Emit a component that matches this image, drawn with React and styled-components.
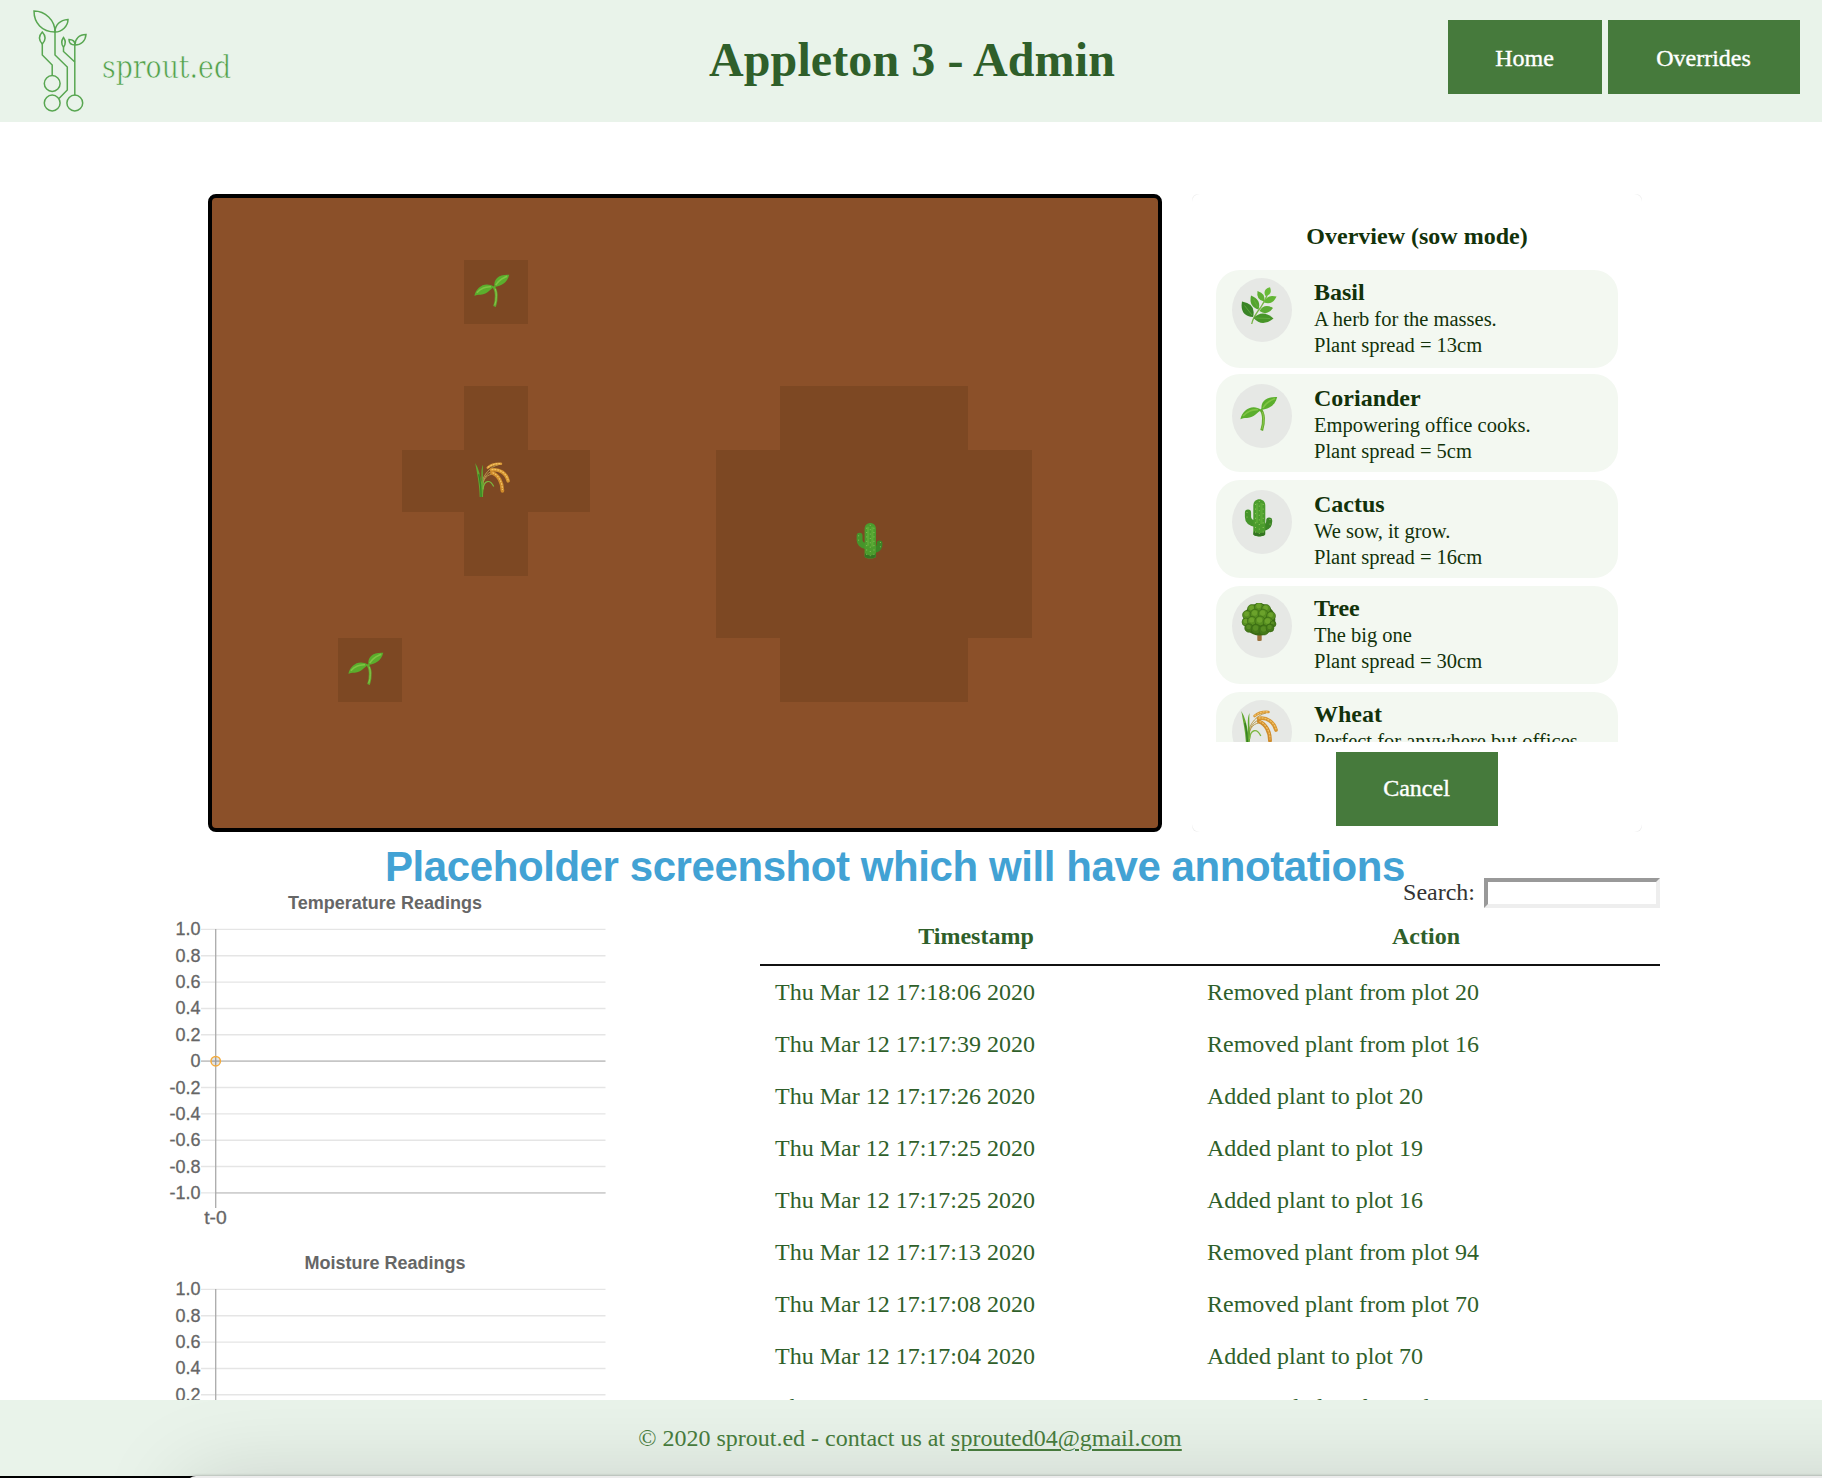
import React from "react";
import styled, { createGlobalStyle } from "styled-components";

const serif = `"Liberation Serif", "Times New Roman", serif`;
const sans = `"Liberation Sans", Helvetica, Arial, sans-serif`;

const GlobalStyle = createGlobalStyle`
  * { box-sizing: border-box; }
  body { margin: 0; background: #fff; font-family: ${serif}; font-size: 24px; overflow: hidden; }
`;

const Page = styled.div`
  position: relative;
  width: 1822px;
  height: 1478px;
  display: flex;
  flex-direction: column;
  overflow: hidden;
  background: #fff;
`;

const Header = styled.header`
  height: 122px;
  flex: none;
  display: grid;
  grid-template-columns: 1fr auto 1fr;
  align-items: start;
  background: #e9f3ea;
`;

const Title = styled.h1`
  margin: 0;
  padding: 31px 0 0 2px;
  font-size: 48px;
  line-height: 58px;
  letter-spacing: 0.1px;
  color: #2f5f2a;
`;

const Nav = styled.nav`
  display: flex;
  justify-content: flex-end;
  gap: 6px;
  padding: 20px 22px 0 0;
`;

const Button = styled.button`
  height: 74px;
  border: 0;
  background: #467a3c;
  color: #fff;
  font: 24px/28px ${serif};
  -webkit-text-stroke: 0.4px #fff;
`;

const NavButton = styled(Button)`
  width: ${(p) => p.$width}px;
  padding: 2px 1px 0 0;
`;

const CancelButton = styled(Button)`
  width: 162px;
  padding: 0 1px 2px 0;
`;

const Main = styled.main`
  flex: 1;
  min-height: 0;
  overflow: hidden;
  padding-top: 72px;
`;

const GardenRow = styled.section`
  display: flex;
  gap: 30px;
  height: 638px;
  padding-left: 208px;
`;

const Board = styled.div`
  width: 954px;
  display: grid;
  grid-template-columns: repeat(7, 64px 62px) 64px;
  grid-template-rows: repeat(5, 62px 64px);
  border: 4px solid #000;
  border-radius: 8px;
  background: #8b5029;
`;

const Plot = styled.div`
  background: ${(p) => (p.$shaded ? "#7d4823" : "transparent")};
  padding: 11px 0 0 10px;
  line-height: 0;
`;

const PanelEdge = styled.aside`
  width: 450px;
  border-radius: 6px;
  background: #ededed;
`;

const Panel = styled.div`
  height: 100%;
  border-radius: 8px;
  background: #fff;
  display: flex;
  flex-direction: column;
  align-items: center;
  color: #12320a;
`;

const PanelTitle = styled.h2`
  margin: 0;
  padding-top: 28px;
  height: 76px;
  font-size: 24px;
  line-height: 28px;
`;

const PlantList = styled.div`
  width: 402px;
  height: 472px;
  margin-bottom: 10px;
  overflow: hidden;
`;

const PlantCard = styled.div`
  height: 98px;
  margin-bottom: ${(p) => p.$gap}px;
  padding: ${(p) => p.$top}px 16px 0;
  display: flex;
  gap: 22px;
  border-radius: 24px;
  background: #f3f8f1;
`;

const Badge = styled.div`
  width: 60px;
  height: 64px;
  flex: none;
  padding: 9px 0 0 8px;
  border-radius: 50%;
  background: #e6e8e5;
  line-height: 0;
`;

const PlantName = styled.div`
  font-weight: bold;
  line-height: 28px;
`;

const PlantText = styled.div`
  font-size: 20.5px;
  line-height: 26px;
  white-space: nowrap;
`;

const DataRow = styled.section`
  display: flex;
  padding: 46px 0 0 140px;
`;

const Charts = styled.div`
  width: 620px;
  display: flex;
  flex-direction: column;
  padding-top: 2px;
  svg { display: block; flex: none; }
`;

const LogPanel = styled.div`
  width: 900px;
`;

const SearchBar = styled.label`
  display: flex;
  justify-content: flex-end;
  gap: 9px;
  height: 44px;
  line-height: 28px;
  color: #333;
`;

const SearchInput = styled.input`
  width: 176px;
  height: 30px;
  padding: 0;
  border: 4px solid;
  border-color: #999 #eee #eee #999;
  border-radius: 0;
  background: #fff;
`;

const LogHead = styled.div`
  display: grid;
  grid-template-columns: 432px 468px;
  height: 44px;
  line-height: 28px;
  border-bottom: 2px solid #111;
  font-weight: bold;
  text-align: center;
  color: #2f5f2a;
`;

const LogRow = styled.div`
  display: grid;
  grid-template-columns: 432px 468px;
  height: 52px;
  line-height: 52px;
  color: #2f5f2a;
  div { padding-left: 15px; }
  &:last-child { line-height: 50px; }
`;

const Annotation = styled.div`
  position: absolute;
  left: 385px;
  top: 843px;
  font: bold 42px/48px ${sans};
  letter-spacing: -0.42px;
  white-space: nowrap;
  color: #42a2d4;
`;

const Footer = styled.footer`
  position: relative;
  flex: none;
  height: 78px;
  padding-right: 2px;
  overflow: hidden;
  text-align: center;
  line-height: 76px;
  background: linear-gradient(#e9f3ea, #e9f3ea) 0 0 / 100% 76px no-repeat #000;
  color: #467a3c;
`;

const FooterText = styled.span`
  position: relative;
  a { color: inherit; text-decoration-thickness: 2px; text-underline-offset: 3px; }
`;

const WindowBehind = styled.div`
  position: absolute;
  left: 186px;
  top: 76px;
  width: 1800px;
  height: 300px;
  border-radius: 10px 0 0 0;
  background: #ececec;
  box-shadow: 0 0 3px rgba(0, 0, 0, 0.35), 0 4px 90px rgba(0, 0, 0, 0.15);
`;

function Logo() {
  return (
    <svg width="260" height="122" viewBox="0 0 260 122" fill="none" stroke="#58a651" strokeWidth="1.5">
      <path d="M34 11C45 11 55 20 55 32C42 32 34 23 34 11Z" />
      <path d="M55 32C55 25 60 20 68 19.500C68 26 62 32 55 32Z" />
      <path d="M55 30V55L67.300 67V90L59 98.500" />
      <path d="M42.300 32C38.500 36 38.500 40 42.300 44C46 40 46 36 42.300 32Z" />
      <path d="M42.300 43V55L52.200 65V76" />
      <path d="M63.500 37.500C61 41 61 44 63.500 47C66 44 66 41 63.500 37.500Z" />
      <path d="M63.500 46V51.500L74.800 62" />
      <path d="M74.800 42V95.500" />
      <path d="M75 45C75 39 79 34.500 86 34.500C85.500 41 81 45 75 45ZM75 45C71.500 45 69 43 69 39.500C72.500 39.500 75 41.500 75 45Z" />
      <circle cx="52.200" cy="83.500" r="7.900" />
      <circle cx="52.200" cy="103" r="7.900" />
      <circle cx="74.800" cy="103" r="7.900" />
      <text x="102" y="77.500" fontFamily="DejaVu Serif, serif" fontSize="32" textLength="129" lengthAdjust="spacingAndGlyphs" fill="#4fa047" stroke="#e9f3ea" strokeWidth=".65">sprout.ed</text>
    </svg>
  );
}

function Leaf({ from, to, w, fill = "#55a52c" }) {
  const [x1, y1] = from;
  const [x2, y2] = to;
  const dx = x2 - x1, dy = y2 - y1;
  const len = Math.hypot(dx, dy);
  const nx = (-dy / len) * w, ny = (dx / len) * w;
  const mx = x1 + dx * 0.45, my = y1 + dy * 0.45;
  return (
    <path d={`M${x1} ${y1}Q${mx + nx} ${my + ny} ${x2} ${y2}Q${mx - nx} ${my - ny} ${x1} ${y1}Z`} fill={fill} />
  );
}

function Basil() {
  return (
    <>
      <path d="M11.700 37C13 30 17 25 21 20C24 15 27 10 28 5" fill="none" stroke="#79b548" strokeWidth="1.300" />
      <Leaf from={[25.5, 9]} to={[30, 0.3]} w={6} fill="#69bb38" />
      <Leaf from={[24, 14.5]} to={[17.5, 4]} w={6} fill="#5fb033" />
      <Leaf from={[24, 15.5]} to={[36.5, 9.5]} w={6.5} fill="#62b534" />
      <Leaf from={[18.5, 22.5]} to={[11, 8.5]} w={7.5} fill="#54a42f" />
      <Leaf from={[19.5, 24]} to={[33, 21]} w={7} fill="#5cab33" />
      <Leaf from={[13, 30]} to={[2, 14.5]} w={10.5} fill="#398426" />
      <Leaf from={[13.5, 31]} to={[33.5, 31.5]} w={9.5} fill="#479528" />
      <path d="M12 28L4.500 18.500M15 31L30 31.500M17.500 20L13.500 12" stroke="#6fb548" strokeWidth=".6" />
    </>
  );
}

function Sprout() {
  return (
    <>
      <path d="M20.500 16.500C24 20 24.500 29 21.700 37.500" fill="none" stroke="#64ab2e" strokeWidth="2.900" />
      <path d="M.4 26.200C2.500 17 12 10.500 21.500 17C17 19 15 24.500 7 25C4 25 2 25.500 .4 26.200Z" fill="#5bae2d" />
      <path d="M21.500 17C20.500 8 26 3.500 37.200 4C35 13 29 15.500 21.500 17Z" fill="#5bae2d" />
      <path d="M3 23C8 17 13 17 18 16.500M23 15C26 9 30 8 35 5.500" fill="none" stroke="#7fc443" strokeWidth="1.600" />
      <path d="M22.500 19C24 23 24 30 22 36" fill="none" stroke="#93cc52" strokeWidth=".8" />
    </>
  );
}

function Cactus() {
  return (
    <>
      <path d="M8 13.500V18C8 22 10.500 24 16 25" fill="none" stroke="#46952b" strokeWidth="6.200" strokeLinecap="round" />
      <path d="M29.200 21.500C29.500 26 27 28.500 22 29" fill="none" stroke="#3b8526" strokeWidth="6" strokeLinecap="round" />
      <path d="M13.300 6.500C13.300-2 25.300-2 25.300 6.500V35C25.300 38.300 13.300 38.300 13.300 35Z" fill="#4b9c2d" />
      <path d="M17 4V24M21.500 4V25" stroke="#62b33a" strokeWidth="2.400" opacity=".65" />
      <path d="M14 32C17 35 22 35 25 32V35C25.300 38 13.300 38 13.300 35Z" fill="#347522" />
      <path d="M15.500 5V34M19.300 2V35M23.200 5V34M7 13V20M30 20V27" fill="none" stroke="#b0cf74" strokeWidth=".9" strokeDasharray="1 3.600" opacity=".8" />
    </>
  );
}

const crownBlobs = [
  [12, 6, 4.5], [19, 4, 4.5], [26, 6, 4.5], [7, 12, 4.5], [15, 11, 4.8], [23, 11, 4.8], [31, 13, 4.5],
  [6, 19, 4], [12, 18, 4.6], [20, 18, 5], [28, 19, 4.8], [33, 21, 3], [9, 25, 4.3], [16, 26, 4.8], [24, 27, 5], [30, 25, 4],
];

function Tree() {
  return (
    <>
      <path d="M17.300 28H21.700V37.500C20 38.300 18.500 38.300 17.300 37.500Z" fill="#9a713a" />
      <circle cx="19.300" cy="16.500" r="16" fill="#3a6a15" />
      {crownBlobs.map(([x, y, r], i) => (
        <g key={i}>
          <circle cx={x} cy={y} r={r} fill={y > 20 ? "#457a19" : "#578f20"} stroke="#386713" strokeWidth=".6" />
          <circle cx={x - 0.4} cy={y - 1} r={r * 0.55} fill="#74a930" opacity={y > 20 ? 0.4 : 0.7} />
        </g>
      ))}
    </>
  );
}

function Wheat() {
  return (
    <>
      <path d="M8 24C10 14 17 6 26 4M9 25C10 17 15 11 22 10M9 25C11 16 16 13 24 14" fill="none" stroke="#b99a50" strokeWidth="1" />
      <path d="M6 38C6 25 3 12 1.300 2C5 8 7 16 8 24C8 16 7 9 9.500 4C9 12 9.500 20 10.500 27C10 31 9.500 34 9.500 38Z" fill="#63a832" />
      <path d="M7.500 38C7.500 31 7 22 5 14" fill="none" stroke="#358124" strokeWidth="1.400" />
      <path d="M9.500 30C10.500 20 17 19 20.800 27" fill="none" stroke="#7cb63f" strokeWidth="1.300" />
      <g fill="none" strokeLinecap="round">
        <path d="M14.500 7C18 4 23 2.500 28.500 3" stroke="#d79838" strokeWidth="2.600" />
        <path d="M18.500 9.500C27 8 34 13 36 21" stroke="#d59430" strokeWidth="3.700" />
        <path d="M19 12.500C26 15 30 23 30 31.500" stroke="#cf8b2b" strokeWidth="3.900" />
        <path d="M15 6.500C19 4 23 2 28 3M19 9C27 8 34 13 36 20M20 12.500C26 15 30 23 30 30" stroke="#f2c264" strokeWidth="1.300" strokeDasharray="1 2" />
      </g>
    </>
  );
}

const drawings = { basil: Basil, sprout: Sprout, cactus: Cactus, tree: Tree, wheat: Wheat };

function PlantIcon({ kind, size }) {
  const Drawing = drawings[kind];
  return (
    <svg width={size} height={size} viewBox="0 0 38 38">
      <Drawing />
    </svg>
  );
}

const COLUMNS = 15;
const ROWS = 10;
const planted = { "1,4": "sprout", "4,4": "wheat", "7,2": "sprout", "5,10": "cactus" };

function isShaded(r, c) {
  if ((r === 1 && c === 4) || (r === 7 && c === 2)) return true;
  if (Math.abs(r - 4) + Math.abs(c - 4) <= 1) return true;
  const dr = Math.abs(r - 5), dc = Math.abs(c - 10);
  return dr <= 2 && dc <= 2 && dr + dc < 4;
}

const plots = Array.from({ length: COLUMNS * ROWS }, (_, i) => [Math.floor(i / COLUMNS), i % COLUMNS]);

const plants = [
  { name: "Basil", kind: "basil", text: "A herb for the masses.", spread: 13, top: 8, gap: 6 },
  { name: "Coriander", kind: "sprout", text: "Empowering office cooks.", spread: 5, top: 10, gap: 8 },
  { name: "Cactus", kind: "cactus", text: "We sow, it grow.", spread: 16, top: 10, gap: 8 },
  { name: "Tree", kind: "tree", text: "The big one", spread: 30, top: 8, gap: 8 },
  { name: "Wheat", kind: "wheat", text: "Perfect for anywhere but offices.", spread: 10, top: 8, gap: 8 },
];

const ticks = ["1.0", "0.8", "0.6", "0.4", "0.2", "0", "-0.2", "-0.4", "-0.6", "-0.8", "-1.0"];

function Chart({ title, titleWidth }) {
  return (
    <svg width="480" height="360" viewBox="0 0 480 360" fontFamily="Liberation Sans, Helvetica, sans-serif" fontSize="18" fill="#666">
      <text x="245" y="29" textAnchor="middle" fontWeight="bold" textLength={titleWidth}>{title}</text>
      {ticks.map((t, i) => {
        const y = 49.4 + i * 26.35;
        return (
          <g key={t}>
            <text x="60.500" y={y + 6} textAnchor="end" stroke="#666" strokeWidth=".3">{t}</text>
            <path d={`M61 ${y}H465.500`} stroke={t === "0" ? "#c6c6c6" : "#e5e5e5"} strokeWidth={t === "0" ? 1.8 : 1.4} />
          </g>
        );
      })}
      <path d="M75.700 312.900H465.500" stroke="#d0d0d0" strokeWidth="1.600" />
      <path d="M75.700 49V328" stroke="#aaa" strokeWidth="1.300" />
      <circle cx="75.700" cy="181.200" r="4.700" fill="rgba(0,0,0,.1)" stroke="#f5ac3b" strokeWidth="1.500" />
      <text x="75.500" y="344" textAnchor="middle" textLength="22.500" lengthAdjust="spacingAndGlyphs" stroke="#666" strokeWidth=".3">t-0</text>
    </svg>
  );
}

const log = [
  ["17:18:06", "Removed plant from plot 20"],
  ["17:17:39", "Removed plant from plot 16"],
  ["17:17:26", "Added plant to plot 20"],
  ["17:17:25", "Added plant to plot 19"],
  ["17:17:25", "Added plant to plot 16"],
  ["17:17:13", "Removed plant from plot 94"],
  ["17:17:08", "Removed plant from plot 70"],
  ["17:17:04", "Added plant to plot 70"],
  ["17:16:47", "Removed plant from plot 51"],
];

export default function App() {
  return (
    <Page>
      <GlobalStyle />
      <Header>
        <Logo />
        <Title>Appleton 3 - Admin</Title>
        <Nav>
          <NavButton $width={154}>Home</NavButton>
          <NavButton $width={192}>Overrides</NavButton>
        </Nav>
      </Header>
      <Main>
        <GardenRow>
          <Board>
            {plots.map(([r, c]) => {
              const kind = planted[`${r},${c}`];
              return (
                <Plot key={`${r},${c}`} $shaded={isShaded(r, c)}>
                  {kind && <PlantIcon kind={kind} size={36} />}
                </Plot>
              );
            })}
          </Board>
          <PanelEdge>
            <Panel>
              <PanelTitle>Overview (sow mode)</PanelTitle>
              <PlantList>
                {plants.map((p) => (
                  <PlantCard key={p.name} $top={p.top} $gap={p.gap}>
                    <Badge><PlantIcon kind={p.kind} size={38} /></Badge>
                    <div>
                      <PlantName>{p.name}</PlantName>
                      <PlantText>{p.text}</PlantText>
                      <PlantText>Plant spread = {p.spread}cm</PlantText>
                    </div>
                  </PlantCard>
                ))}
              </PlantList>
              <CancelButton>Cancel</CancelButton>
            </Panel>
          </PanelEdge>
        </GardenRow>
        <DataRow>
          <Charts>
            <Chart title="Temperature Readings" titleWidth={194} />
            <Chart title="Moisture Readings" titleWidth={161} />
          </Charts>
          <LogPanel>
            <SearchBar>
              Search:
              <SearchInput />
            </SearchBar>
            <LogHead>
              <div>Timestamp</div>
              <div>Action</div>
            </LogHead>
            {log.map(([time, action], i) => (
              <LogRow key={i}>
                <div>Thu Mar 12 {time} 2020</div>
                <div>{action}</div>
              </LogRow>
            ))}
          </LogPanel>
        </DataRow>
      </Main>
      <Annotation>Placeholder screenshot which will have annotations</Annotation>
      <Footer>
        <WindowBehind />
        <FooterText>
          © 2020 sprout.ed - contact us at <a href="mailto:sprouted04@gmail.com">sprouted04@gmail.com</a>
        </FooterText>
      </Footer>
    </Page>
  );
}
